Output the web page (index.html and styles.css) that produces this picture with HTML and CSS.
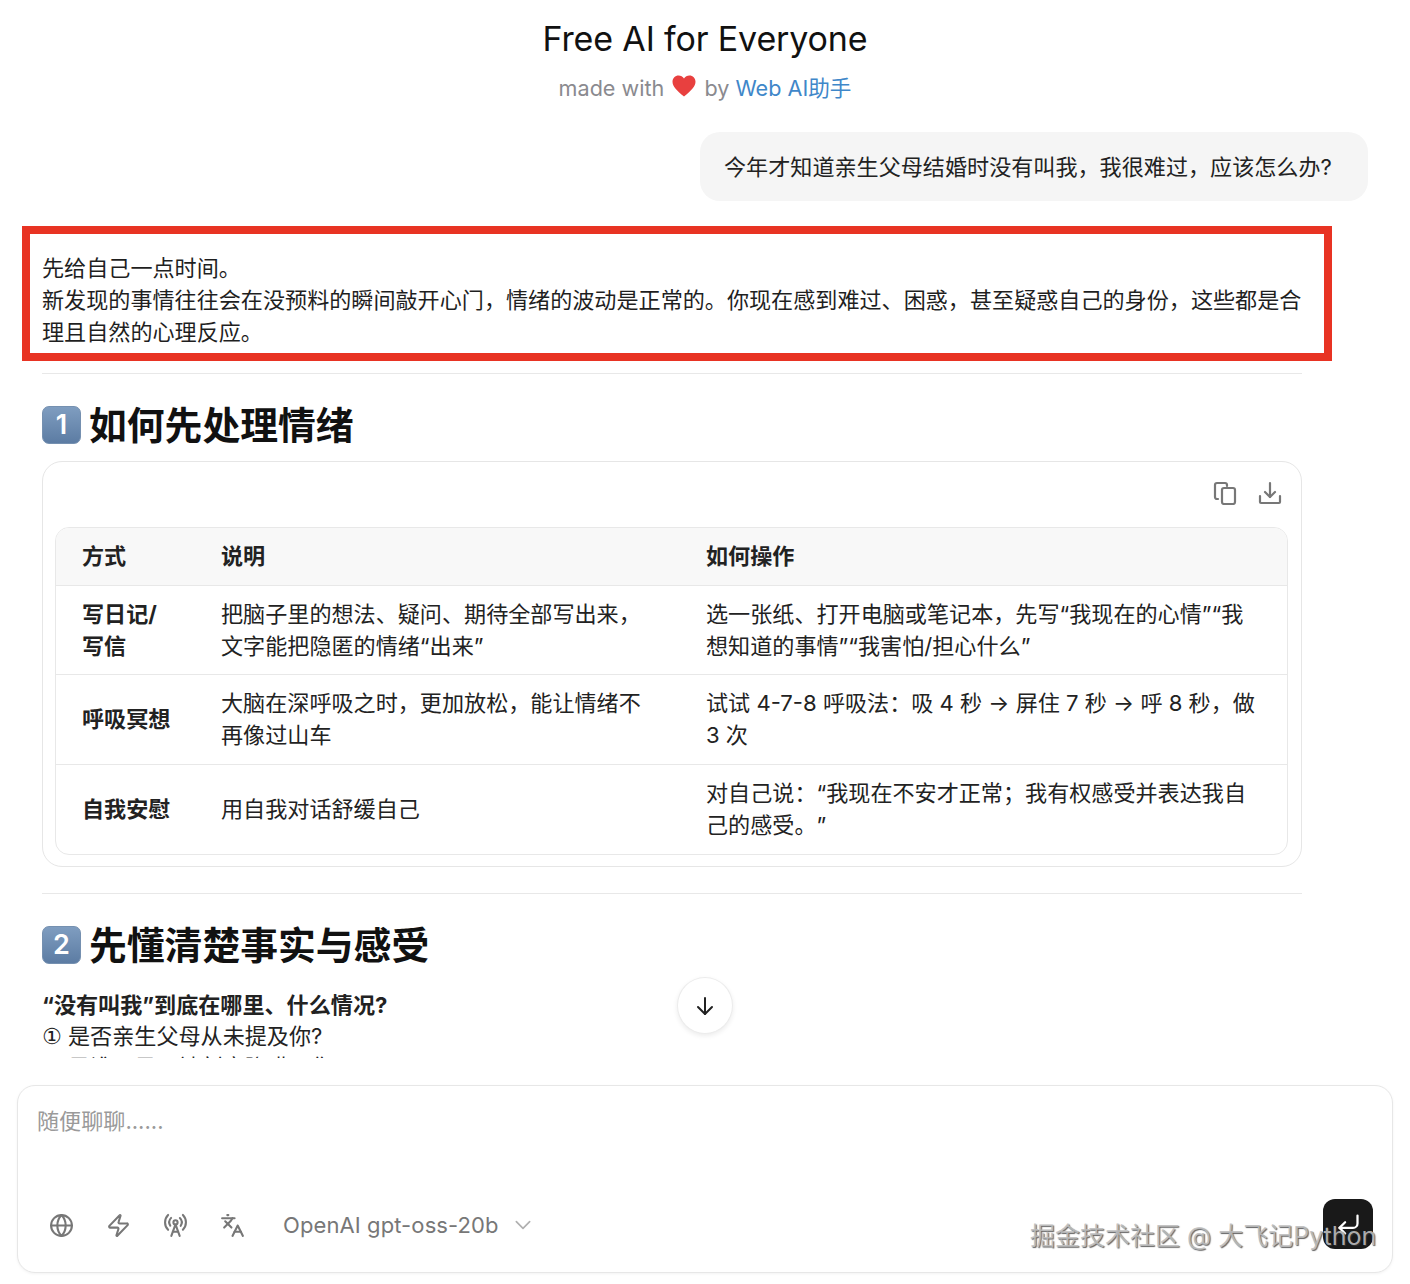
FILE: index.html
```html
<!DOCTYPE html>
<html lang="zh-CN">
<head>
<meta charset="utf-8">
<title>Free AI for Everyone</title>
<link rel="stylesheet" href="styles.css">
</head>
<body>
<div class="page">
  <header class="hero">
    <h1 class="hero-title">Free AI for Everyone</h1>
    <p class="hero-sub">made with
      <svg class="heart" viewBox="0 0 24 22"><path d="M12 21.5C5 15.8 0.5 11.6 0.5 6.8 0.5 3.2 3.2 0.5 6.6 0.5c2.2 0 4.2 1.1 5.4 3 1.2-1.9 3.2-3 5.4-3 3.4 0 6.1 2.7 6.1 6.3 0 4.8-4.5 9-11.5 14.7z"/></svg>
      by <a class="hero-link">Web AI助手</a></p>
  </header>

  <main class="chat">
    <div class="user-row"><div class="bubble">今年才知道亲生父母结婚时没有叫我，我很难过，应该怎么办?</div></div>
    <article class="answer">
      <p class="intro">先给自己一点时间。<br>新发现的事情往往会在没预料的瞬间敲开心门，情绪的波动是正常的。你现在感到难过、困惑，甚至疑惑自己的身份，这些都是合理且自然的心理反应。</p>
      <hr class="rule">
      <h2 class="heading"><span class="keycap">1</span>如何先处理情绪</h2>
      <section class="table-card">
        <div class="table-tools">
          <svg class="tool" viewBox="0 0 24 24"><rect x="9" y="7" width="13" height="16" rx="2"/><path d="M5 18H4a2 2 0 0 1-2-2V4a2 2 0 0 1 2-2h8a2 2 0 0 1 2 2v1"/></svg>
          <svg class="tool" viewBox="0 0 24 24"><path d="M12 2v14"/><path d="m7 11 5 5 5-5"/><path d="M2 15v6a1 1 0 0 0 1 1h18a1 1 0 0 0 1-1v-6"/></svg>
        </div>
        <div class="table-wrap">
          <table class="table">
            <colgroup><col class="c1"><col class="c2"><col class="c3"></colgroup>
            <thead><tr><th>方式</th><th>说明</th><th>如何操作</th></tr></thead>
            <tbody>
              <tr><td class="strong">写日记/<br>写信</td><td>把脑子里的想法、疑问、期待全部写出来，文字能把隐匿的情绪“出来”</td><td>选一张纸、打开电脑或笔记本，先写“我现在的心情”“我想知道的事情”“我害怕/担心什么”</td></tr>
              <tr><td class="strong">呼吸冥想</td><td>大脑在深呼吸之时，更加放松，能让情绪不再像过山车</td><td>试试 4-7-8 呼吸法：吸 4 秒 → 屏住 7 秒 → 呼 8 秒，做 3 次</td></tr>
              <tr><td class="strong">自我安慰</td><td>用自我对话舒缓自己</td><td>对自己说：“我现在不安才正常；我有权感受并表达我自己的感受。”</td></tr>
            </tbody>
          </table>
        </div>
      </section>
      <hr class="rule rule-second">
      <h2 class="heading"><span class="keycap">2</span>先懂清楚事实与感受</h2>
      <p class="lead">“没有叫我”到底在哪里、什么情况?</p>
      <p class="item"><span class="num">①</span>是否亲生父母从未提及你?</p>
      <p class="item"><span class="num">②</span>是谁、是否被刻意隐瞒了你</p>
    </article>
  </main>

  <button class="scroll-down" type="button" aria-label="scroll down">
    <svg viewBox="0 0 24 24"><path d="M12 4v16"/><path d="m5 13 7 7 7-7"/></svg>
  </button>

  <footer class="composer">
    <div class="placeholder">随便聊聊......</div>
    <div class="composer-bar">
      <svg class="ctl" viewBox="0 0 24 24"><circle cx="12" cy="12" r="10"/><path d="M12 2a14.5 14.5 0 0 0 0 20 14.5 14.5 0 0 0 0-20"/><path d="M2 12h20"/></svg>
      <svg class="ctl" viewBox="0 0 24 24"><path d="M4 14a1 1 0 0 1-.78-1.63l9.9-10.2a.5.5 0 0 1 .86.46l-1.92 6.02A1 1 0 0 0 13 10h7a1 1 0 0 1 .78 1.63l-9.9 10.2a.5.5 0 0 1-.86-.46l1.92-6.02A1 1 0 0 0 11 14z"/></svg>
      <svg class="ctl" viewBox="0 0 24 24"><path d="M4.9 16.1C1 12.2 1 5.8 4.9 1.9"/><path d="M7.8 4.7a6.14 6.14 0 0 0-.8 7.5"/><circle cx="12" cy="9" r="2"/><path d="M16.2 4.8c2 2 2.26 5.11.8 7.47"/><path d="M19.1 1.9a9.96 9.96 0 0 1 0 14.1"/><path d="M9.5 18h5"/><path d="m8 22 4-11 4 11"/></svg>
      <svg class="ctl" viewBox="0 0 24 24"><path d="m5 8 6 6"/><path d="m4 14 6-6 2-3"/><path d="M2 5h12"/><path d="M7 2h1"/><path d="m22 22-5-10-5 10"/><path d="M14 18h6"/></svg>
      <span class="model">OpenAI gpt-oss-20b</span>
      <svg class="chev" viewBox="0 0 24 24"><path d="m4 8 8 8 8-8"/></svg>
      <button class="send" type="button" aria-label="send">
        <svg viewBox="0 0 24 24"><path d="M20 4v7a4 4 0 0 1-4 4H4"/><path d="m9 10-5 5 5 5"/></svg>
      </button>
    </div>
  </footer>

  <div class="annotation"></div>
  <div class="watermark">掘金技术社区 @ 大飞记Python</div>
</div>
</body>
</html>
```
FILE: styles.css
```css
* { box-sizing: border-box; }
html, body { margin: 0; padding: 0; background: #fff; }
body {
  font-family: Inter, "Noto Sans CJK SC", "Noto Sans", sans-serif;
  color: #1a1a1a;
  font-size: 22.1px;
  line-height: 32px;
  text-spacing-trim: space-all;
}
.page {
  position: relative;
  width: 1410px;
  height: 1284px;
  overflow: hidden;
  display: flex;
  flex-direction: column;
}
.hero { text-align: center; padding-top: 17px; height: 132px; }
.hero-title { margin: 0; font-size: 34px; line-height: 44px; font-weight: 400; color: #111; letter-spacing: -.15px; }
.hero-sub { margin: 11px 0 0; font-size: 21.6px; line-height: 32px; color: #8a8a8f; }
.heart { width: 24px; height: 22px; margin: 0 2px; fill: #e8403f; vertical-align: -1px; }
.hero-link { color: #3f87c9; }

.chat { height: 926px; flex: none; overflow: hidden; padding: 0 42px; }
.user-row { display: flex; justify-content: flex-end; }
.bubble {
  width: 668px;
  height: 69px;
  padding: 19px 0 0 24px;
  border-radius: 20px;
  background: #f5f5f5;
  color: #222;
  white-space: nowrap;
}
.answer { width: 1260px; padding-top: 51px; }
.intro { margin: 0; color: #1f1f1f; }
.rule { border: 0; border-top: 1px solid #e8e8e8; margin: 25px 0 0; }
.rule-second { margin-top: 26px; }
.heading {
  display: flex;
  align-items: center;
  gap: 8px;
  margin: 27px 0 0;
  height: 50px;
  padding-bottom: 2px;
  font-size: 37.8px;
  line-height: 48px;
  font-weight: 700;
  color: #111;
}
.keycap {
  width: 39px;
  height: 38px;
  border-radius: 7px;
  background: linear-gradient(#7f9dc0, #5c7ca3);
  border: 1px solid #7590b0;
  color: #fff;
  font-size: 27px;
  line-height: 36px;
  font-weight: 600;
  text-align: center;
}
.table-card {
  margin-top: 10px;
  height: 406px;
  border: 1px solid #e6e6e6;
  border-radius: 20px;
  padding: 0 13px 0 12px;
}
.table-tools { height: 65px; display: flex; justify-content: flex-end; align-items: flex-start; gap: 21px; padding: 19px 6px 0 0; }
.tool { width: 24px; height: 24px; fill: none; stroke: #777; stroke-width: 2.2; stroke-linecap: round; stroke-linejoin: round; }
.table-wrap { border: 1px solid #e8e8e8; border-radius: 14px; overflow: hidden; }
.table { width: 100%; border-collapse: collapse; table-layout: fixed; }
.c1 { width: 139px; }
.c2 { width: 485px; }
.table th {
  height: 57px;
  padding: 0 26px;
  background: #f8f8f8;
  font-weight: 700;
  text-align: left;
  color: #222;
}
.table th:first-child, .table td:first-child { padding: 0 0 0 26px; }
.table th:nth-child(2), .table td:nth-child(2) { padding: 0 30px 0 26px; }
.table th:nth-child(3), .table td:nth-child(3) { padding: 0 30px 0 26px; }
.table td { height: 89.5px; padding: 0 26px; border-top: 1px solid #e8e8e8; color: #222; }
.table td.strong { font-weight: 700; color: #222; }
.lead { margin: 18px 0 0; font-weight: 700; color: #222; }
.item { margin: 0; color: #222; line-height: 31px; display: flex; align-items: center; }
.num { font-family: "DejaVu Sans", sans-serif; font-size: 22px; width: 26px; flex: none; }

.scroll-down {
  position: absolute;
  left: 677px;
  top: 977px;
  width: 56px;
  height: 57px;
  padding: 0;
  border: 1px solid #ececec;
  border-radius: 50%;
  background: #fff;
  box-shadow: 0 2px 5px rgba(0,0,0,.08);
  display: flex;
  align-items: center;
  justify-content: center;
}
.scroll-down svg { width: 24px; height: 24px; fill: none; stroke: #222; stroke-width: 2; stroke-linecap: round; stroke-linejoin: round; }

.composer {
  margin: 27px 17px 0;
  height: 188px;
  flex: none;
  border: 1px solid #e7e7e7;
  border-radius: 18px;
  box-shadow: 0 1px 3px rgba(0,0,0,.05);
  padding: 19px 19px 0;
  background: #fff;
}
.placeholder { color: #9a9a9a; height: 94px; line-height: 32px; }
.composer-bar { display: flex; align-items: center; height: 50px; padding-left: 12px; }
.ctl { width: 25px; height: 25px; margin: 2px 32px 0 0; fill: none; stroke: #777; stroke-width: 2; stroke-linecap: round; stroke-linejoin: round; flex: none; }
.model { color: #777; font-size: 22px; margin: 2px 0 0 6px; letter-spacing: .1px; }
.chev { width: 20px; height: 20px; margin: 2px 0 0 14px; fill: none; stroke: #b0b0b0; stroke-width: 2; stroke-linecap: round; stroke-linejoin: round; }
.send {
  margin-left: auto;
  width: 50px;
  height: 50px;
  padding: 0;
  border: 0;
  border-radius: 12px;
  background: #191919;
  display: flex;
  align-items: center;
  justify-content: center;
}
.send svg { width: 27px; height: 27px; fill: none; stroke: #fff; stroke-width: 2; stroke-linecap: round; stroke-linejoin: round; }

.annotation {
  position: absolute;
  left: 22px;
  top: 226px;
  width: 1310px;
  height: 135px;
  border: 8px solid #e83323;
}
.watermark {
  position: absolute;
  left: 1030px;
  top: 1218px;
  font-size: 25px;
  line-height: 36px;
  color: rgba(190,190,190,.9);
  text-shadow: 1px 1px 1px rgba(60,60,60,.8);
  white-space: nowrap;
}
```
